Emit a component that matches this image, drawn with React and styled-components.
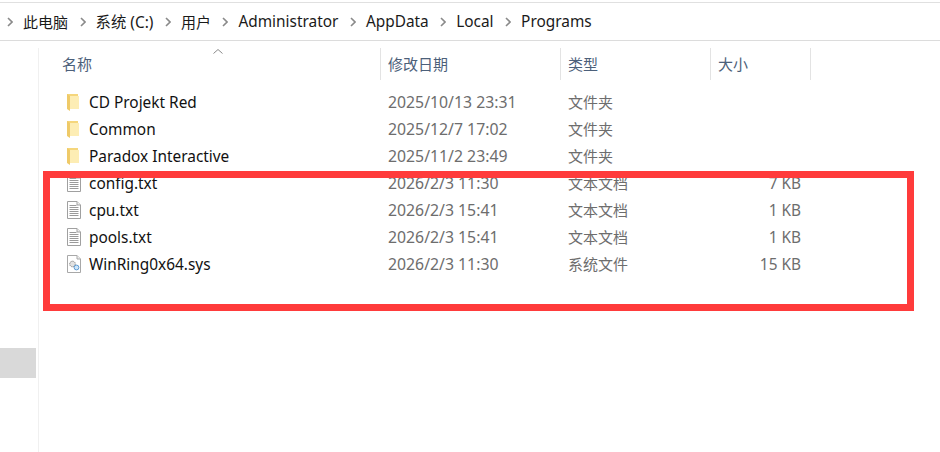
import styled, { createGlobalStyle } from 'styled-components';

const crumbs = [
	{ label: '此电脑', cjk: true },
	{ label: '系统 (C:)' },
	{ label: '用户', cjk: true },
	{ label: 'Administrator' },
	{ label: 'AppData' },
	{ label: 'Local' },
	{ label: 'Programs' },
];

const files = [
	{ name: 'CD Projekt Red', date: '2025/10/13 23:31', type: '文件夹', size: '', icon: 'folder' },
	{ name: 'Common', date: '2025/12/7 17:02', type: '文件夹', size: '', icon: 'folder' },
	{ name: 'Paradox Interactive', date: '2025/11/2 23:49', type: '文件夹', size: '', icon: 'folder' },
	{ name: 'config.txt', date: '2026/2/3 11:30', type: '文本文档', size: '7 KB', icon: 'text' },
	{ name: 'cpu.txt', date: '2026/2/3 15:41', type: '文本文档', size: '1 KB', icon: 'text' },
	{ name: 'pools.txt', date: '2026/2/3 15:41', type: '文本文档', size: '1 KB', icon: 'text' },
	{ name: 'WinRing0x64.sys', date: '2026/2/3 11:30', type: '系统文件', size: '15 KB', icon: 'sys' },
];

const FolderIcon = () => (
	<svg width="14" height="18" viewBox="0 0 14 18">
		<path d="M0 1h11v15H0z" fill="#f5d67c" />
		<path d="M3 3h9v13H3z" fill="#fdedb4" />
		<path d="M0 1l3 2v15l-3-2z" fill="#efca68" />
	</svg>
);

const TextIcon = () => (
	<svg width="14" height="18" viewBox="0 0 14 18">
		<path d="M.5.5h9.5l3.5 3.5v13.5H.5z" fill="#fff" stroke="#a0a0a0" />
		<path d="M10 .5V4h3.5" fill="#f0f0f0" stroke="#a0a0a0" />
		<path d="M2.5 4.5h7M2.5 6.5h9M2.5 8.5h9M2.5 10.5h9M2.5 12.5h9M2.5 14.5h9" stroke="#9a9a9a" />
	</svg>
);

const SysIcon = () => (
	<svg width="14" height="18" viewBox="0 0 14 18">
		<path d="M.5.5h9.5l3.5 3.5v13.5H.5z" fill="#fff" stroke="#a8a8a8" />
		<path d="M10 .5V4h3.5" fill="#f0f0f0" stroke="#a8a8a8" />
		<circle cx="5.5" cy="9" r="2.8" fill="#e2e2e2" stroke="#8c8c8c" strokeDasharray="1.5 .6" />
		<circle cx="9.5" cy="12.5" r="2.4" fill="#cfe5f7" stroke="#5d9bd3" />
	</svg>
);

const icons = { folder: FolderIcon, text: TextIcon, sys: SysIcon };

const App = () => {
	return (
		<>
			<GlobalStyle />
			<Page>
				<Breadcrumb>
					{crumbs.map((crumb) => (
						<Crumb key={crumb.label} $cjk={crumb.cjk}>
							<Chevron viewBox="0 0 6 10">
								<path d="M1 1l4 4-4 4" fill="none" stroke="#8a8a8a" strokeWidth="1.6" />
							</Chevron>
							<span>{crumb.label}</span>
						</Crumb>
					))}
				</Breadcrumb>
				<Body>
					<NavPane>
						<NavSelection />
					</NavPane>
					<Content>
						<SortCaret viewBox="0 0 10 5">
							<path d="M.5 4.5L5 .5l4.5 4" fill="none" stroke="#8a8a8a" />
						</SortCaret>
						<HeaderRow>
							<HeaderCell $width={330} $pad={11}>名称</HeaderCell>
							<HeaderCell $width={180} $pad={7}>修改日期</HeaderCell>
							<HeaderCell $width={150} $pad={7}>类型</HeaderCell>
							<HeaderCell $width={100} $pad={7}>大小</HeaderCell>
						</HeaderRow>
						<FileList>
							{files.map((item) => {
								const Icon = icons[item.icon];
								return (
									<FileRow key={item.name}>
										<NameCell>
											<Icon />
											<FileName>{item.name}</FileName>
										</NameCell>
										<DateCell>{item.date}</DateCell>
										<TypeCell>{item.type}</TypeCell>
										<SizeCell>{item.size}</SizeCell>
									</FileRow>
								);
							})}
						</FileList>
						<Highlight />
					</Content>
				</Body>
			</Page>
		</>
	);
};

const GlobalStyle = createGlobalStyle`
	html, body {
		margin: 0;
		background: #fff;
	}
	body {
		font-family: 'Noto Sans', 'Noto Sans CJK SC', sans-serif;
	}
`;

const Page = styled.div`
	width: 940px;
	height: 452px;
	overflow: hidden;
	position: relative;
	background: #fff;
`;

const Breadcrumb = styled.div`
	display: flex;
	align-items: center;
	height: 37px;
	margin-top: 2px;
	padding-left: 7px;
	border-top: 1px solid #e0e0e0;
	border-bottom: 1px solid #dcdcdc;
	font-size: 15.4px;
	color: #1a1a1a;
`;

const Crumb = styled.div`
	display: flex;
	align-items: center;
	gap: 10px;
	margin-right: 11.5px;
	font-size: ${({ $cjk }) => ($cjk ? '15px' : 'inherit')};
`;

const Chevron = styled.svg`
	width: 6px;
	height: 10px;
`;

const Body = styled.div`
	display: flex;
	height: 411px;
`;

const NavPane = styled.div`
	width: 39px;
	flex: none;
	margin-top: 7px;
	box-sizing: border-box;
	border-right: 1px solid #f0f0f0;
	padding-top: 300px;
`;

const NavSelection = styled.div`
	width: 36px;
	height: 30px;
	background: #d9d9d9;
`;

const Content = styled.div`
	flex: 1;
	position: relative;
`;

const SortCaret = styled.svg`
	position: absolute;
	left: 174px;
	top: 8px;
	width: 10px;
	height: 5px;
`;

const HeaderRow = styled.div`
	display: flex;
	margin: 7px 0 0 12px;
	height: 32px;
`;

const HeaderCell = styled.div`
	width: ${({ $width }) => $width}px;
	box-sizing: border-box;
	padding-left: ${({ $pad }) => $pad}px;
	padding-bottom: 2px;
	border-right: 1px solid #e3e3e3;
	display: flex;
	align-items: center;
	font-size: 15px;
	color: #4c607a;
`;

const FileList = styled.div`
	margin-top: 8px;
`;

const FileRow = styled.div`
	display: flex;
	align-items: center;
	height: 27px;
	font-size: 15px;
`;

const NameCell = styled.div`
	display: flex;
	align-items: center;
	gap: 8px;
	width: 341px;
	box-sizing: border-box;
	padding-left: 28px;
	font-size: 15.4px;
	color: #111;
`;

const FileName = styled.span`
	padding-top: 2px;
`;

const DateCell = styled.div`
	width: 180px;
	padding-left: 8px;
	box-sizing: border-box;
	font-size: 15.8px;
	color: #6d6d6d;
`;

const TypeCell = styled.div`
	width: 150px;
	padding-left: 8px;
	box-sizing: border-box;
	color: #6d6d6d;
`;

const SizeCell = styled.div`
	width: 91px;
	padding-top: 2px;
	text-align: right;
	font-size: 15.4px;
	color: #6d6d6d;
`;

const Highlight = styled.div`
	position: absolute;
	left: 4px;
	top: 130px;
	width: 871px;
	height: 140px;
	box-sizing: border-box;
	border: 7px solid #ff3b3b;
`;

export default App;
